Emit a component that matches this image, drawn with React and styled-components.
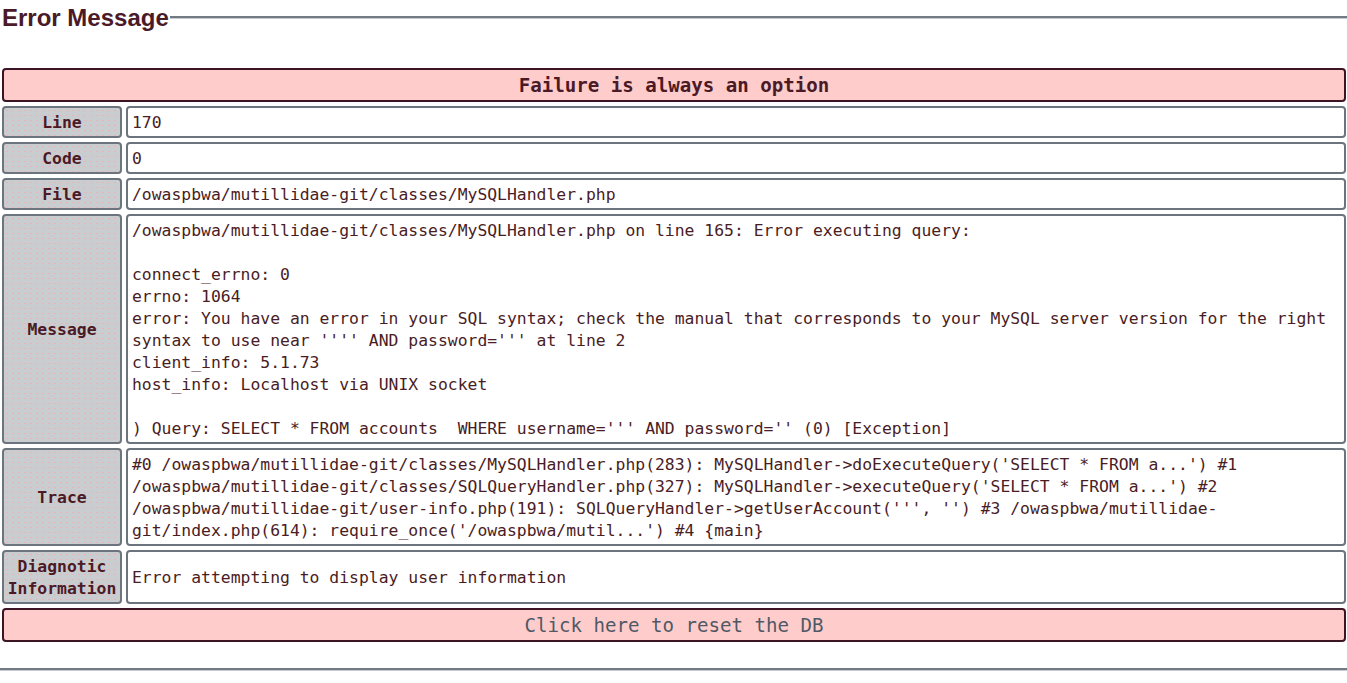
import React from "react";
import styled, { createGlobalStyle } from "styled-components";

const GlobalStyle = createGlobalStyle`
  html, body {
    margin: 0;
    padding: 0;
    background: #ffffff;
  }
`;

const MONO = `"DejaVu Sans Mono", "Liberation Mono", monospace`;

const rows = [
  { label: "Line", value: "170" },
  { label: "Code", value: "0" },
  { label: "File", value: "/owaspbwa/mutillidae-git/classes/MySQLHandler.php" },
  {
    label: "Message",
    pre: true,
    value:
      "/owaspbwa/mutillidae-git/classes/MySQLHandler.php on line 165: Error executing query: \n\nconnect_errno: 0\nerrno: 1064\nerror: You have an error in your SQL syntax; check the manual that corresponds to your MySQL server version for the right syntax to use near '''' AND password=''' at line 2\nclient_info: 5.1.73\nhost_info: Localhost via UNIX socket\n\n) Query: SELECT * FROM accounts  WHERE username=''' AND password='' (0) [Exception]",
  },
  {
    label: "Trace",
    value:
      "#0 /owaspbwa/mutillidae-git/classes/MySQLHandler.php(283): MySQLHandler->doExecuteQuery('SELECT * FROM a...') #1 /owaspbwa/mutillidae-git/classes/SQLQueryHandler.php(327): MySQLHandler->executeQuery('SELECT * FROM a...') #2 /owaspbwa/mutillidae-git/user-info.php(191): SQLQueryHandler->getUserAccount(''', '') #3 /owaspbwa/mutillidae-git/index.php(614): require_once('/owaspbwa/mutil...') #4 {main}",
  },
  { label: "Diagnotic Information", value: "Error attempting to display user information" },
];

const App = () => {
  return (
    <Page>
      <GlobalStyle />
      <TitleRow>
        <Title>Error Message</Title>
        <Rule />
      </TitleRow>
      <ErrorGrid>
        <Banner>Failure is always an option</Banner>
        {rows.map((row) => (
          <React.Fragment key={row.label}>
            <Label>{row.label}</Label>
            <Value $pre={row.pre}>
              <div>{row.value}</div>
            </Value>
          </React.Fragment>
        ))}
        <Banner $link>Click here to reset the DB</Banner>
      </ErrorGrid>
      <BottomRule />
    </Page>
  );
};

const Page = styled.div`
  padding: 0 1px 0 2px;
`;

const TitleRow = styled.div`
  display: flex;
  align-items: center;
  margin-top: 4px;
  height: 28px;
`;

const Title = styled.h1`
  margin: 0;
  font-family: "Liberation Sans", Arial, sans-serif;
  font-weight: bold;
  font-size: 24px;
  line-height: 28px;
  color: #4a1a28;
  padding-right: 1px;
`;

const Rule = styled.div`
  flex: 1;
  margin-right: -1px;
  margin-top: -1px;
  border-top: 2px solid #727b85;
  border-bottom: 1px solid #c9cdd2;
`;

const ErrorGrid = styled.div`
  display: grid;
  grid-template-columns: 120px 1fr;
  gap: 4px;
  margin-top: 36px;
  font-family: ${MONO};
  font-size: 16.4px;
  line-height: 22px;
`;

const Banner = styled.div`
  grid-column: 1 / -1;
  height: 34px;
  box-sizing: border-box;
  display: flex;
  align-items: center;
  justify-content: center;
  padding-top: 2px;
  background: #ffcccc;
  border: 2px solid #3d1424;
  border-radius: 4px;
  font-weight: ${(p) => (p.$link ? "normal" : "bold")};
  font-size: 19.1px;
  color: ${(p) => (p.$link ? "#4f5966" : "#4a1a26")};
  cursor: ${(p) => (p.$link ? "pointer" : "default")};
`;

const Label = styled.div`
  box-sizing: border-box;
  display: flex;
  align-items: center;
  justify-content: center;
  text-align: center;
  padding: 4px 2px 2px;
  border: 2px solid #6c747d;
  border-radius: 4px;
  background-color: #cacdcf;
  background-image: radial-gradient(circle, #eab3b6 0.5px, transparent 0.9px);
  background-size: 6px 5px;
  font-weight: bold;
  color: #4a1a26;
`;

const Value = styled.div`
  box-sizing: border-box;
  display: flex;
  align-items: center;
  padding: 4px 4px 2px;
  border: 2px solid #6c747d;
  border-radius: 4px;
  background: #ffffff;
  color: #4a1c24;
  white-space: ${(p) => (p.$pre ? "pre-wrap" : "normal")};
  min-width: 0;
`;

const BottomRule = styled.div`
  margin: 26px -1px 0 -2px;
  border-top: 2px solid #727b85;
  border-bottom: 1px solid #c9cdd2;
`;

export default App;
